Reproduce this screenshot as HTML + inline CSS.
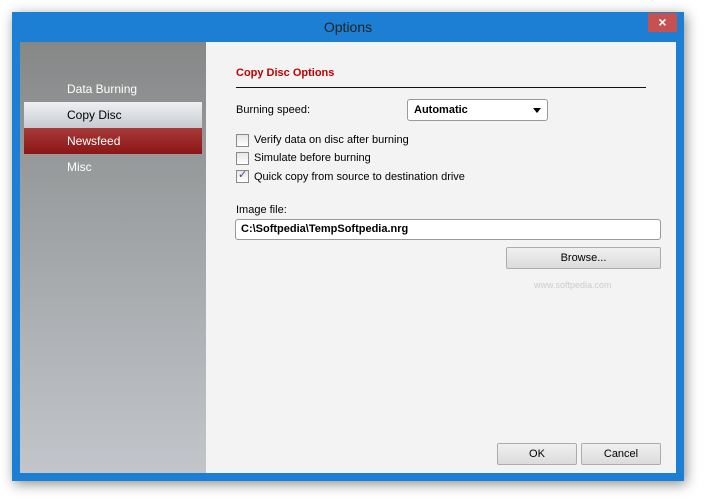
<!DOCTYPE html>
<html><head><style>
body{margin:0;width:704px;height:501px;background:#fff;font-family:"Liberation Sans",sans-serif;position:relative;overflow:hidden}
.a{position:absolute}
.t{font-size:11px;color:#000}
.cb{position:absolute;width:11px;height:11px;border:1px solid #8a8a8a;background:linear-gradient(#e6e6e6,#fff)}
.btn{position:absolute;height:20px;border:1px solid #acacac;border-radius:2px;background:linear-gradient(#f0f0f0,#dcdcdc);font-size:11px;text-align:center;line-height:20px}
</style></head><body>
<div class="a" style="left:12px;top:12px;width:672px;height:469px;background:#1c7fd4;box-shadow:2px 3px 12px rgba(0,0,0,.45)"></div>
<div class="a" style="left:0;top:19px;width:696px;text-align:center;font-size:14px;color:#222">Options</div>
<div class="a" style="left:648px;top:13px;width:29px;height:19px;background:#c75050;color:#fff;text-align:center;font-size:14px;line-height:19px;font-weight:bold">×</div>
<div class="a" style="left:20px;top:42px;width:656px;height:431px;background:#f3f3f3"></div>
<div class="a" style="left:20px;top:42px;width:186px;height:431px;background:linear-gradient(#868888,#c2c6cb)"></div>
<div class="a" style="left:67px;top:82px;color:#fff;font-size:12px">Data Burning</div>
<div class="a" style="left:24px;top:102px;width:178px;height:26px;background:linear-gradient(#eef0f3,#c7cbd0)"></div>
<div class="a" style="left:67px;top:108px;font-size:12px">Copy Disc</div>
<div class="a" style="left:24px;top:128px;width:178px;height:26px;background:linear-gradient(#a73a3a,#8d1515)"></div>
<div class="a" style="left:67px;top:134px;color:#fff;font-size:12px">Newsfeed</div>
<div class="a" style="left:67px;top:160px;color:#fff;font-size:12px">Misc</div>
<div class="a" style="left:236px;top:67px;color:#c00000;font-size:11px;font-weight:bold">Copy Disc Options</div>
<div class="a" style="left:236px;top:87px;width:410px;height:1px;background:#111"></div>
<div class="a t" style="left:236px;top:104px">Burning speed:</div>
<div class="a" style="left:407px;top:99px;width:139px;height:20px;border:1px solid #999;border-radius:3px;background:#fff;font-size:11px;font-weight:bold;line-height:20px;text-indent:6px">Automatic<span style="position:absolute;right:6px;top:8px;border:4px solid transparent;border-top:5px solid #000;border-bottom:0"></span></div>
<div class="cb" style="left:236px;top:134px"></div><div class="a t" style="left:254px;top:134px">Verify data on disc after burning</div>
<div class="cb" style="left:236px;top:152px"></div><div class="a t" style="left:254px;top:152px">Simulate before burning</div>
<div class="cb" style="left:236px;top:170px"><span style="position:absolute;left:1px;top:-3px;font-size:11px;color:#3a4a90">✓</span></div><div class="a t" style="left:254px;top:171px">Quick copy from source to destination drive</div>
<div class="a t" style="left:236px;top:204px">Image file:</div>
<div class="a" style="left:235px;top:219px;width:424px;height:19px;border:1px solid #999;border-radius:3px;background:#fff;font-size:11px;font-weight:bold;line-height:19px;text-indent:5px">C:\Softpedia\TempSoftpedia.nrg</div>
<div class="btn" style="left:506px;top:247px;width:153px">Browse...</div>
<div class="a" style="left:534px;top:280px;font-size:9px;color:#ccc">www.softpedia.com</div>
<div class="btn" style="left:497px;top:443px;width:78px">OK</div>
<div class="btn" style="left:581px;top:443px;width:78px">Cancel</div>
</body></html>
